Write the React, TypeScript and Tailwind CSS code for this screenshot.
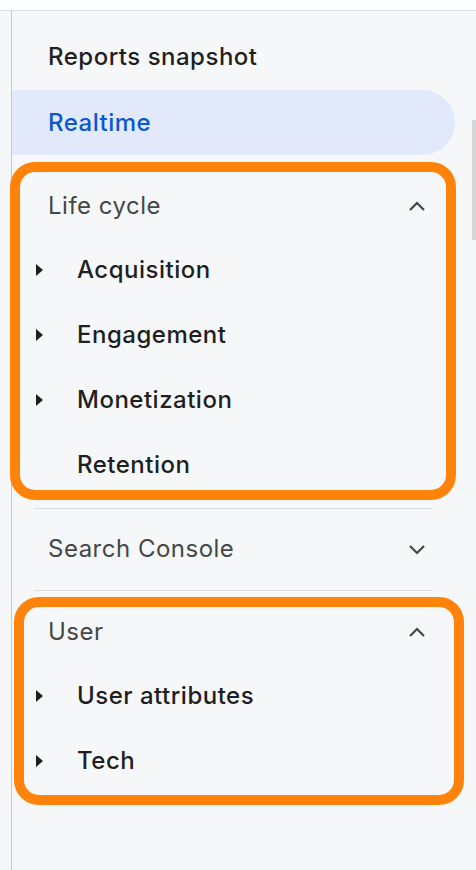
import { type ReactNode } from 'react'

const SANS = "font-['Inter','Roboto','Liberation_Sans',sans-serif] tracking-[0.5px]"

function ChevronUp() {
  return (
    <svg width="18" height="11" viewBox="0 0 18 11" fill="none" stroke="#444746" strokeWidth={2.2}>
      <polyline points="2,9 9,2 16,9" />
    </svg>
  )
}

function ChevronDown() {
  return (
    <svg width="18" height="11" viewBox="0 0 18 11" fill="none" stroke="#444746" strokeWidth={2.2}>
      <polyline points="2,2 9,9 16,2" />
    </svg>
  )
}

function Caret() {
  return (
    <svg width="7" height="12" viewBox="0 0 7 12" fill="#1f1f1f">
      <polygon points="0,0 7,6 0,12" />
    </svg>
  )
}

function SectionHeader({ label, open }: { label: string; open: boolean }) {
  return (
    <div className="flex h-[64px] items-center justify-between pl-[36px] pr-[50px] pt-[2px]">
      <span className="text-[24px] text-[#444746]">{label}</span>
      {open ? <ChevronUp /> : <ChevronDown />}
    </div>
  )
}

function Item({ label, caret = true }: { label: string; caret?: boolean }) {
  return (
    <div className="flex h-[65px] items-center pl-[24px]">
      <span className="flex w-[41px] items-center">{caret && <Caret />}</span>
      <span className="text-[24px] font-medium text-[#1f1f1f]">{label}</span>
    </div>
  )
}

function Divider() {
  return <div className="ml-[22px] h-px w-[398px] bg-[#dadce0]" />
}

function Highlight({ className, children }: { className: string; children?: ReactNode }) {
  return (
    <div className={`pointer-events-none absolute rounded-[25px] border-[10px] border-[#ff820a] ${className}`}>
      {children}
    </div>
  )
}

export default function App() {
  return (
    <div className={`min-h-screen bg-white ${SANS}`}>
      <div className="h-[11px] border-b border-[#dadce0] bg-white" />
      <div className="flex min-h-[859px]">
        <div className="w-[12px] border-r border-[#c7c7c7] bg-[#f6f7f9]" />

        <nav className="relative flex-1 bg-[#f6f7f9] pt-[13px]">
          {/* Top links */}
          <div className="flex h-[65px] items-center pl-[36px]">
            <span className="text-[24px] font-medium text-[#1f1f1f]">Reports snapshot</span>
          </div>
          <div className="mt-px flex h-[65px] w-[443px] items-center rounded-r-full bg-[#e1e9fb] pl-[36px]">
            <span className="text-[24px] font-medium text-[#0b57d0]">Realtime</span>
          </div>

          {/* Life cycle */}
          <div className="mt-[18px]">
            <SectionHeader label="Life cycle" open />
            <Item label="Acquisition" />
            <Item label="Engagement" />
            <Item label="Monetization" />
            <Item label="Retention" caret={false} />
          </div>

          <div className="mt-[11px]"><Divider /></div>

          {/* Search Console */}
          <div className="mt-[7px]">
            <SectionHeader label="Search Console" open={false} />
          </div>

          <div className="mt-[10px]"><Divider /></div>

          {/* User */}
          <div className="mt-[8px]">
            <SectionHeader label="User" open />
            <Item label="User attributes" />
            <Item label="Tech" />
          </div>

          {/* annotation boxes */}
          <Highlight className="left-[-2px] top-[151px] h-[338px] w-[446px]" />
          <Highlight className="left-[2px] top-[586px] h-[208px] w-[450px]" />

          {/* scrollbar thumb */}
          <div className="absolute right-0 top-[109px] h-[120px] w-[4px] bg-[#d6d6d6]" />
        </nav>
      </div>
    </div>
  )
}
